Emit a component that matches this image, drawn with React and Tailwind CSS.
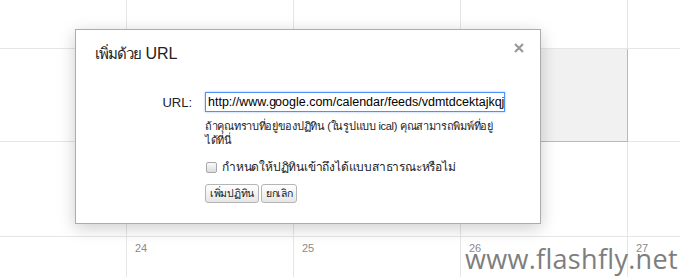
import React from "react";

function Cell({ num, today, last, bottom }) {
  return (
    <div
      className={
        "relative border-[#e6e6e6] " +
        (last ? "" : "border-r ") +
        (bottom ? "" : "border-b ") +
        (today ? "bg-[#f1f1f1] border-[#b9b9b9]! border-l -ml-px" : "")
      }
    >
      {num && (
        <span className="absolute left-[8px] top-[4px] text-[11px] leading-[14px] text-[#8a8a8a]">
          {num}
        </span>
      )}
    </div>
  );
}

export default function App() {
  const rows = [
    [null, null, null, null, null],
    [null, null, null, "13", null],
    [null, null, null, "20", null],
    [null, "24", "25", "26", "27"],
  ];
  return (
    <div
      className="relative w-[680px] h-[277px] overflow-hidden bg-white"
      style={{ fontFamily: '"Liberation Sans", Arial, "Noto Sans", sans-serif' }}
    >
      <div className="grid grid-cols-[127px_167px_167px_167px_52px] grid-rows-[49px_93px_95px_40px] h-full">
        {rows.map((r, ri) =>
          r.map((n, ci) => (
            <Cell
              key={ri + "-" + ci}
              num={n}
              today={ri === 1 && ci === 3}
              last={ci === 4}
              bottom={ri === 3}
            />
          ))
        )}
      </div>

      {/* Dialog */}
      <div className="absolute left-[75px] top-[29px] w-[466px] h-[195px] bg-white border border-[#acacac] shadow-[0_4px_16px_rgba(0,0,0,0.2)]">
        <div className="flex items-start justify-between pl-[19px] pr-[16px] pt-[14px]">
          <div className="text-[16px] leading-[20px] text-[#222]">
            <span className="text-[15px] tracking-[-1px]">เพิ่มด้วย</span> URL
          </div>
          <svg width="10" height="10" viewBox="0 0 10 10" className="mt-[-1px]">
            <path d="M1 1 L9 9 M9 1 L1 9" stroke="#9a9a9a" strokeWidth="2.2" />
          </svg>
        </div>

        <div className="flex items-start mt-[28px]">
          <div className="w-[116px] text-right text-[13px] leading-[20px] text-[#222] pt-px">URL:</div>
          <div className="ml-[13px] flex flex-col">
            <div className="w-[300px] h-[20px] border border-[#4d90fe] shadow-[0_0_2px_rgba(77,144,254,0.6)] flex items-center pl-[2px] text-[12.5px] text-black whitespace-nowrap overflow-hidden">
              <span>http://www.g</span>
              <span className="inline-block w-px h-[15px] bg-black -mr-px"></span>
              <span>oogle.com/calendar/feeds/vdmtdcektajkqj</span>
            </div>
            <div className="w-[310px] mt-[7px] text-[11px] leading-[14px] text-[#222] tracking-[-0.3px] whitespace-nowrap">
              ถ้าคุณทราบที่อยู่ของปฏิทิน (ในรูปแบบ ical) คุณสามารถพิมพ์ที่อยู่
              <br />
              ได้ที่นี่
            </div>
            <div className="flex items-center mt-[12px] ml-px">
              <span className="inline-block w-[11px] h-[11px] rounded-[2px] border border-[#a8a8a8] bg-gradient-to-b from-[#fafafa] to-[#dcdcdc]"></span>
              <span className="ml-[5px] text-[12px] leading-[16px] text-[#222] tracking-[-0.2px]">
                กำหนดให้ปฏิทินเข้าถึงได้แบบสาธารณะหรือไม่
              </span>
            </div>
            <div className="flex gap-[2px] mt-[9px]">
              <button className="h-[19px] px-[4px] rounded-[3px] border border-[#b5b5b5] bg-gradient-to-b from-white to-[#e6e6e6] text-[10.5px] leading-[17px] text-[#222] tracking-[-0.3px]">
                เพิ่มปฏิทิน
              </button>
              <button className="h-[19px] px-[4px] rounded-[3px] border border-[#b5b5b5] bg-gradient-to-b from-white to-[#e6e6e6] text-[10.5px] leading-[17px] text-[#222] tracking-[-0.3px]">
                ยกเลิก
              </button>
            </div>
          </div>
        </div>
      </div>

      {/* Watermark */}
      <div
        className="absolute left-[465px] top-[243px] text-[27px] leading-[32px] text-[#7e7e7e] tracking-[0.3px]"
        style={{ fontFamily: '"Open Sans", "DejaVu Sans", sans-serif' }}
      >
        www.flashfly.net
      </div>
    </div>
  );
}
